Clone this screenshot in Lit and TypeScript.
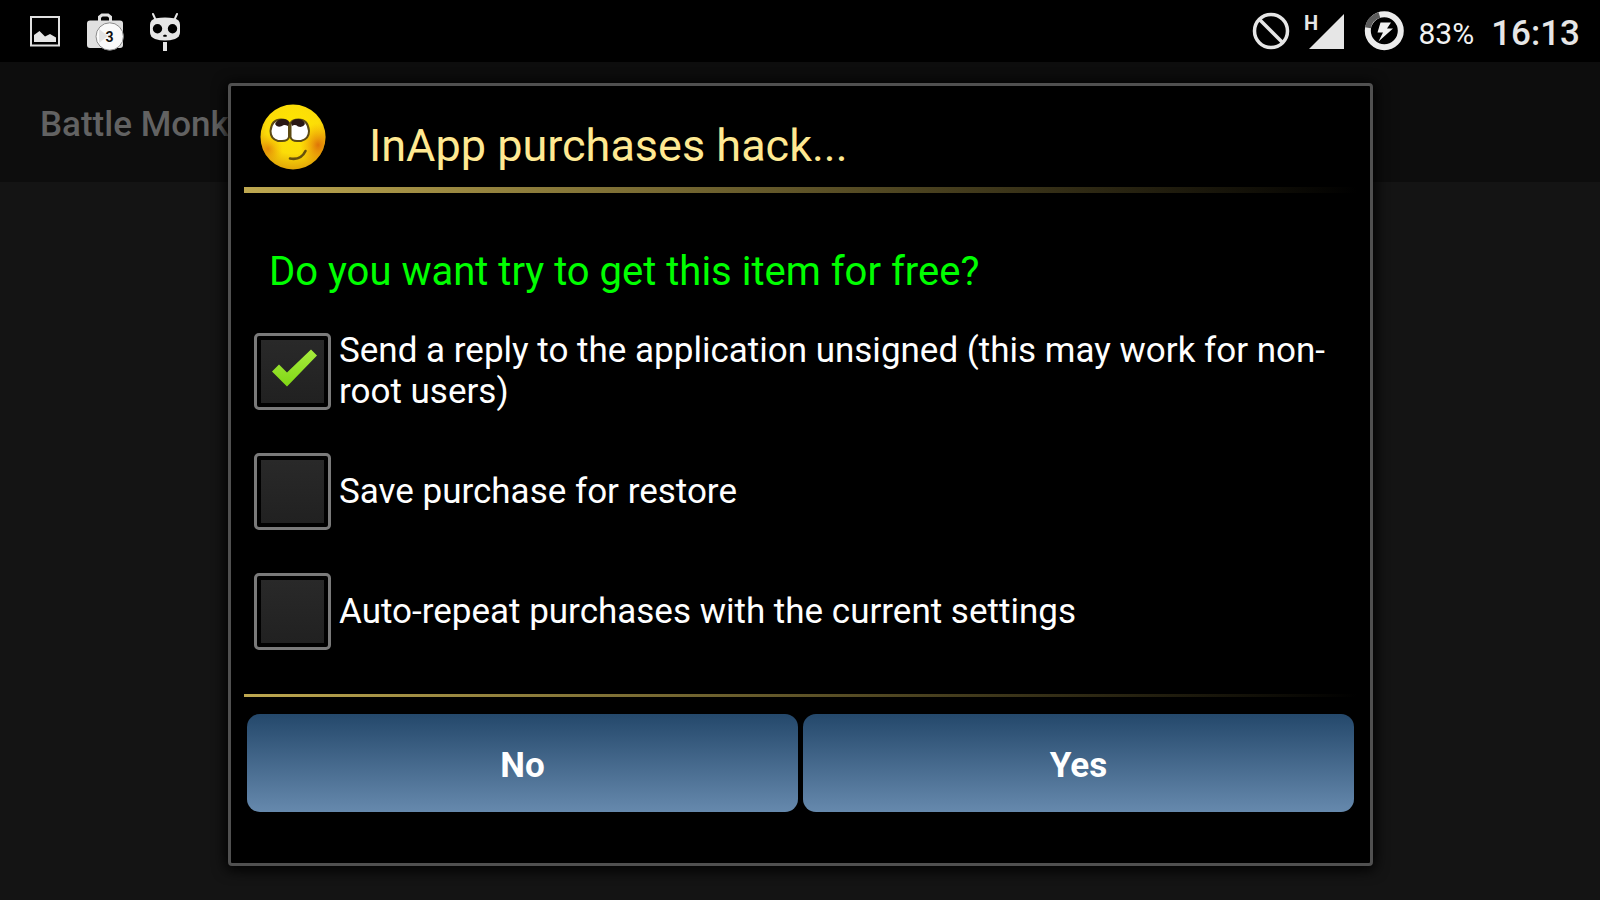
import { LitElement, html, css, svg } from "lit";
import { customElement, state } from "lit/decorators.js";

@customElement("status-bar")
class StatusBar extends LitElement {
  static styles = css`
    :host {
      display: flex;
      align-items: center;
      justify-content: space-between;
      height: 62px;
      padding: 0 20px 0 15px;
      background: #000;
      color: #e6e6e6;
    }
    .group {
      display: flex;
      align-items: center;
    }
    svg {
      display: block;
      flex: none;
    }
    .net {
      font: 700 20px "Roboto", sans-serif;
    }
    .count {
      font: 700 14px "Roboto", sans-serif;
    }
    .battery,
    .clock {
      padding-top: 5px;
      line-height: 40px;
    }
    .battery {
      margin-left: 11px;
      font-size: 30px;
      color: #f2f2f2;
    }
    .clock {
      margin-left: 17px;
      font-size: 35px;
      font-weight: 500;
    }
  `;

  render() {
    return html`
      <div class="group">
        <svg width="60" height="62" viewBox="0 0 60 62" role="img" aria-label="Screenshot">
          <rect x="16" y="17" width="28" height="28.500" fill="none" stroke="#e0e0e0" stroke-width="2" />
          <path d="M19 42V35L24.500 31L30 36.500L35 34L41 37.500V42Z" fill="#e6e6e6" />
        </svg>
        <svg width="60" height="62" viewBox="0 0 60 62" role="img" aria-label="App updates">
          <path d="M24.500 21V17L27 15H33L35.500 17V21" fill="none" stroke="#e0e0e0" stroke-width="3" />
          <rect x="12" y="20.500" width="36" height="27.500" rx="3" fill="#e0e0e0" />
          <circle cx="34.700" cy="36.500" r="13.700" fill="#fafafa" stroke="#8c8c8c" stroke-width="1" />
          <path d="M24 29V43L33 36Z" fill="#e3e3e3" />
          <text class="count" x="34.500" y="42" text-anchor="middle" fill="#111">3</text>
        </svg>
        <svg width="60" height="62" viewBox="0 0 60 62" role="img" aria-label="CyanogenMod">
          <path d="M18 14L20.500 19.500M42 14L39.500 19.500" stroke="#e6e6e6" stroke-width="2" stroke-linecap="round" />
          <path d="M21 18.200Q30 16.800 39 18.200Q45 19.500 45 25V32Q45 37 40 39Q30 42 20 39Q15 37 15 32V25Q15 19.500 21 18.200Z" fill="#e6e6e6" />
          <circle cx="22.500" cy="28.700" r="4.700" fill="#000" />
          <circle cx="37.500" cy="28.700" r="4.700" fill="#000" />
          <path d="M28 35.500L30 34.500L32 35.500L31.500 36.700H28.500Z" fill="#000" />
          <rect x="28" y="42" width="4" height="9" fill="#e6e6e6" />
        </svg>
      </div>
      <div class="group">
        <svg width="156" height="62" viewBox="-6 0 156 62" role="img" aria-label="Blocked, H signal, charging">
          <g fill="none" stroke="#e6e6e6" stroke-width="3.500">
            <circle cx="14" cy="31" r="16.500" />
            <path d="M3 20L25 42" />
          </g>
          <text class="net" x="47" y="30" fill="#e6e6e6">H</text>
          <path d="M87 14V49H52Z" fill="#e6e6e6" />
          <circle cx="127.300" cy="30.700" r="16.500" fill="none" stroke="#ececec" stroke-width="6" />
          <path d="M110.900 27.800A16.500 16.500 0 0 1 122.400 15" fill="none" stroke="#5c5c5c" stroke-width="6" />
          <path d="M123.500 22.500H134L130 28.500H136L121.500 41.500L126 32.500H120.500Z" fill="#f2f2f2" />
        </svg>
        <span class="battery">83%</span>
        <span class="clock">16:13</span>
      </div>
    `;
  }
}

@customElement("purchase-dialog")
class PurchaseDialog extends LitElement {
  @state() options = [
    { label: "Send a reply to the application unsigned (this may work for non-root users)", checked: true },
    { label: "Save purchase for restore", checked: false },
    { label: "Auto-repeat purchases with the current settings", checked: false },
  ];

  static styles = css`
    :host {
      display: block;
      box-sizing: border-box;
      padding: 0 13px 51px;
      border: 3px solid #505050;
      border-radius: 4px;
      background: #000;
      box-shadow: 0 2px 14px 2px #000;
      color: #fff;
    }
    .head {
      display: flex;
      align-items: flex-end;
      gap: 41px;
      padding: 18px 16px 15px;
    }
    .face {
      display: block;
      width: 68px;
      height: 68px;
      flex: none;
    }
    h1 {
      margin: 0;
      font-size: 45px;
      line-height: 53px;
      font-weight: 400;
      color: #ffe992;
    }
    .rule {
      height: 3px;
      background: linear-gradient(90deg, #bea850, #000);
    }
    .thick {
      height: 6px;
    }
    .question {
      margin: 55px 25px 16px;
      font-size: 40px;
      line-height: 47px;
      color: #00ff00;
    }
    .option {
      display: flex;
      align-items: center;
      gap: 8px;
      min-height: 120px;
      padding: 0 10px;
      font-size: 35px;
      line-height: 41px;
    }
    .box {
      appearance: none;
      display: grid;
      box-sizing: border-box;
      flex: none;
      width: 77px;
      height: 77px;
      margin: 0;
      padding: 4px;
      border: 3px solid #7a7a7a;
      border-radius: 5px;
      background: linear-gradient(#292929, #212121) content-box;
    }
    .box:checked::after {
      content: "";
      background: linear-gradient(#a4ea3a 20%, #7fd614 75%);
      clip-path: polygon(11px 32px, 18px 25px, 26px 33px, 50px 10px, 56px 16px, 26px 47px);
    }
    .actions {
      display: grid;
      grid-template-columns: 1fr 1fr;
      gap: 5px;
      padding: 17px 3px 0;
    }
    .action {
      height: 98px;
      padding: 4px 0 0;
      border: 0;
      border-radius: 13px;
      background: linear-gradient(#24486b, #6689ad);
      font: 700 35px "Roboto", sans-serif;
      color: #fff;
    }
    .options {
      margin-bottom: 23px;
    }
  `;

  private toggle(index: number) {
    this.options = this.options.map((o, i) => (i === index ? { ...o, checked: !o.checked } : o));
  }

  private face() {
    return svg`
      <defs>
        <radialGradient id="skin" cx="0.5" cy="0.35" r="0.68">
          <stop offset="0" stop-color="#ffe600" />
          <stop offset="0.6" stop-color="#fbdc08" />
          <stop offset="1" stop-color="#dfa008" />
        </radialGradient>
        <radialGradient id="blush" cx="0.5" cy="0.5" r="0.5">
          <stop offset="0" stop-color="#dc6a08" stop-opacity="0.9" />
          <stop offset="1" stop-color="#f09a05" stop-opacity="0" />
        </radialGradient>
        <clipPath id="head"><circle cx="33" cy="33" r="32.500" /></clipPath>
      </defs>
      <circle cx="33" cy="33" r="32.500" fill="url(#skin)" />
      <g clip-path="url(#head)">
        <ellipse cx="58" cy="41" rx="18" ry="22" fill="url(#blush)" />
        <ellipse cx="8" cy="45" rx="15" ry="15" fill="url(#blush)" opacity="0.7" />
      </g>
      <g fill="#fff" stroke="#5c4a14" stroke-width="2">
        <path d="M29 19V33Q28 37 22 37H18Q10.500 35 10.500 27Q11.500 15.500 21 15.500Q27 15.500 29 19Z" />
        <path d="M30.500 19V33Q31.500 37 37 37H41Q49 35 49 27Q48 15.500 38.500 15.500Q32.500 15.500 30.500 19Z" />
      </g>
      <path d="M15 20Q18 14.500 23 15Q28 15 29 19L28 22Q24 20 22 22Q17 24 15 20Z" fill="#2a1814" />
      <path d="M31 19Q33 15 38 15Q43 15 45 20Q43 24 38 22.500Q35 20 32 22Z" fill="#2a1814" />
      <path d="M30 54.500Q41 56.500 45.500 47" fill="none" stroke="#66500c" stroke-width="2.600" stroke-linecap="round" />
    `;
  }

  render() {
    return html`
      <header class="head">
        <svg class="face" viewBox="0 0 68 68" aria-hidden="true">${this.face()}</svg>
        <h1>InApp purchases hack...</h1>
      </header>
      <div class="rule thick"></div>
      <p class="question">Do you want try to get this item for free?</p>
      <div class="options">
        ${this.options.map(
          (o, i) => html`
            <label class="option">
              <input class="box" type="checkbox" .checked=${o.checked} @change=${() => this.toggle(i)} />
              <span>${o.label}</span>
            </label>
          `,
        )}
      </div>
      <div class="rule"></div>
      <div class="actions">
        <button class="action" type="button">No</button>
        <button class="action" type="button">Yes</button>
      </div>
    `;
  }
}

@customElement("app-root")
class AppRoot extends LitElement {
  static styles = css`
    :host {
      display: block;
      position: relative;
      min-height: 100vh;
      background: #141414;
      font-family: "Roboto", sans-serif;
    }
    .appbar {
      display: flex;
      align-items: center;
      box-sizing: border-box;
      height: 120px;
      padding: 4px 40px 0;
      background: #0d0d0d;
      font-size: 35px;
      line-height: 41px;
      font-weight: 500;
      color: #626262;
    }
    .overlay {
      position: absolute;
      inset: 0;
      padding: 83px 227px 34px 228px;
    }
  `;

  render() {
    return html`
      <status-bar></status-bar>
      <div class="appbar">Battle Monk</div>
      <div class="overlay">
        <purchase-dialog role="dialog" aria-label="InApp purchases hack"></purchase-dialog>
      </div>
    `;
  }
}
